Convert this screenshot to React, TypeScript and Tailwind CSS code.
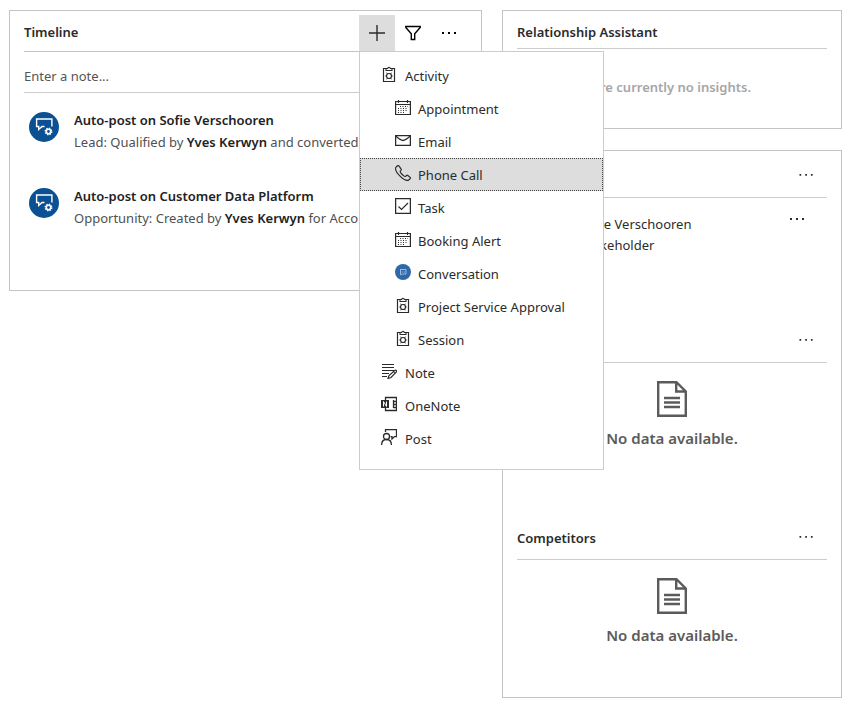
import type { ReactNode } from "react";

function Svg({ children, size = 16 }: { children: ReactNode; size?: number }) {
  return (
    <svg
      width={size}
      height={size}
      viewBox={`0 0 ${size} ${size}`}
      fill="none"
      stroke="currentColor"
      strokeWidth="1"
      aria-hidden="true"
      className="shrink-0"
    >
      {children}
    </svg>
  );
}

const ClipboardIcon = () => (
  <Svg>
    <path d="M5 2.500H2.500v13h11v-13H11" strokeWidth="1.200" />
    <path d="M5 4.500v-2h1.700a1.300 1.300 0 0 1 2.600 0H11v2z" strokeWidth="1.100" />
    <circle cx="8" cy="10" r="2.500" strokeWidth="1.200" />
    <path d="M6.500 8 5.700 6.700M9.500 8l.8-1.300M5.500 10H4.300M11.700 10h-1.200M6.500 12l-.8 1.300M9.500 12l.8 1.300" />
  </Svg>
);

const CalendarIcon = () => (
  <Svg>
    <path d="M.6 2.500h14.800v13H.6zM.6 5.500h14.800M3.500 1v3M12.500 1v3" strokeWidth="1.200" />
    <path d="M5 7.500h8M3 9.500h10M3 11.500h10M3 13.500h7" strokeDasharray="1 1.500" />
  </Svg>
);

const MailIcon = () => (
  <Svg>
    <path d="M.6 3.600h14.800v9.800H.6z" strokeWidth="1.300" />
    <path d="M.7 4C3 6 6 8.500 8 8.500S13 6 15.300 4" strokeWidth="1.300" />
  </Svg>
);

const PhoneIcon = () => (
  <Svg>
    <path
      d="M2.200 1 .9 2.300C-.1 4 1.600 7.700 4.800 10.900s6.900 5.200 8.800 4.200l1.500-1.300c.4-.5.4-1 0-1.400l-2.200-1.900c-.5-.4-1-.3-1.400 0l-1 .9c-.7.4-1.800-.4-3.300-1.900S4.800 7 5.200 6.200l.8-.9c.4-.5.4-.9 0-1.400L4.100 1.100C3.600.6 2.700.5 2.200 1z"
      strokeWidth="1.200"
    />
  </Svg>
);

const TaskIcon = () => (
  <Svg>
    <path d="M.6.600h14.800v14.800H.6z" strokeWidth="1.300" />
    <path d="m3.500 8.500 3 3 6.500-6.500" strokeWidth="1.200" />
  </Svg>
);

const ConversationIcon = () => (
  <Svg>
    <circle cx="8" cy="8" r="8" fill="#2f69a8" stroke="none" />
    <path d="M5 5.500h6v4.500H7.500L5 11M5.500 5.500V10" stroke="#a9c5e2" strokeWidth=".9" />
    <path d="M6.700 8h1M8.700 8h1" stroke="#a9c5e2" />
  </Svg>
);

const NoteIcon = () => (
  <Svg>
    <path d="M1 1.500h12M1 4.500h12M1 7.500h12M1 10.500h7M1 13.500h5" strokeWidth="1.200" />
    <path d="m7 15.500 1-3 6-5.200c1-.5 2 .6 1.400 1.500L10 14.500z" fill="white" strokeWidth="1.200" />
    <path d="m12.500 8.700 1.500 1.500" />
  </Svg>
);

const OneNoteIcon = () => (
  <Svg>
    <path d="M4.500 4V1.500h11v13h-11V12M12.500 4v8M12.500 5.500h3M12.500 8.500h3M12.500 11.500h3" strokeWidth="1.300" />
    <path d="M0 4h8v8H0z" fill="currentColor" stroke="none" />
    <path d="M2.500 10.500v-5l3 5v-5" stroke="white" />
  </Svg>
);

const PostIcon = () => (
  <Svg>
    <circle cx="5.500" cy="7.500" r="3" strokeWidth="1.300" />
    <path d="M.6 16c0-3.300 2-5.500 4.900-5.500s4.900 2.200 4.900 5.500" strokeWidth="1.300" />
    <path d="M4.500 3V.600h11v7h-2L11 10V7.600H9.500" strokeWidth="1.300" />
  </Svg>
);

const PlusIcon = () => (
  <Svg>
    <path d="M8 0v16M0 8h16" strokeWidth="1.400" />
  </Svg>
);

const FilterIcon = () => (
  <Svg>
    <path d="M.8 1.500h14.400v1L9.700 8.800v5.700H6.300V8.800L.8 2.500z" strokeWidth="1.400" />
  </Svg>
);

const MoreIcon = ({ wide = false }: { wide?: boolean }) => (
  <Svg>
    {wide ? (
      <path d="M1 7h2v2H1zM7 7h2v2H7zM13 7h2v2h-2z" fill="currentColor" stroke="none" />
    ) : (
      <path d="M1.500 7h1.700v1.700H1.500zM7.200 7h1.700v1.700H7.200zM12.900 7h1.700v1.700h-1.700z" fill="currentColor" stroke="none" />
    )}
  </Svg>
);

const AutoPostIcon = () => (
  <svg width="30" height="30" viewBox="0 0 30 30" fill="none" aria-hidden="true" className="mt-[3px] shrink-0">
    <circle cx="15" cy="15" r="15" fill="#0a5093" />
    <path d="M15.500 14.500H13L9.700 17.500v-3H7.600V7h15.300v7.500" stroke="white" strokeWidth="1.400" />
    <circle cx="19.500" cy="19.500" r="2.200" stroke="white" strokeWidth="1.600" />
    <circle cx="19.500" cy="19.500" r="3.200" stroke="white" strokeWidth="1.500" strokeDasharray="1.400 1.110" />
  </svg>
);

const DocumentIcon = () => (
  <svg width="30" height="36" viewBox="0 0 30 36" fill="none" stroke="#5b5b5b" strokeWidth="2.400" aria-hidden="true">
    <path d="M1.200 1.200h18.300l9.300 9.300v24.300H1.200zM19.200 1.200v9.300h9.600" />
    <path d="M7 17h16M7 21.500h16M7 26h16" />
  </svg>
);

type Item = { label: string; icon: () => ReactNode; nested?: boolean; active?: boolean };

const items: Item[] = [
  { label: "Activity", icon: ClipboardIcon },
  { label: "Appointment", icon: CalendarIcon, nested: true },
  { label: "Email", icon: MailIcon, nested: true },
  { label: "Phone Call", icon: PhoneIcon, nested: true, active: true },
  { label: "Task", icon: TaskIcon, nested: true },
  { label: "Booking Alert", icon: CalendarIcon, nested: true },
  { label: "Conversation", icon: ConversationIcon, nested: true },
  { label: "Project Service Approval", icon: ClipboardIcon, nested: true },
  { label: "Session", icon: ClipboardIcon, nested: true },
  { label: "Note", icon: NoteIcon },
  { label: "OneNote", icon: OneNoteIcon },
  { label: "Post", icon: PostIcon },
];

function CreateMenu() {
  return (
    <div
      role="menu"
      aria-label="Create"
      className="absolute top-full left-0 z-10 w-[245px] border border-[#cccccc] bg-white pt-[7px] pb-[14px]"
    >
      {items.map(({ label, icon: Icon, nested, active }) => (
        <button
          key={label}
          type="button"
          role="menuitem"
          className={`flex h-[33px] w-full items-center border text-left ${
            nested ? "gap-[7px] pl-[34px]" : "gap-2 pl-5"
          } ${active ? "border-dotted border-[#444444] bg-[#dddddd]" : "border-transparent"}`}
        >
          <span className="pb-1">
            <Icon />
          </span>
          {label}
        </button>
      ))}
    </div>
  );
}

function Post({ subject, children }: { subject: string; children: ReactNode }) {
  return (
    <li className="flex h-[76px] gap-[15px] pl-[5px]">
      <AutoPostIcon />
      <div className="min-w-0 flex-1 leading-[22px]">
        <h3 className="truncate font-semibold text-[#222222]">Auto-post on {subject}</h3>
        <p className="overflow-hidden whitespace-nowrap text-[#505050]">{children}</p>
      </div>
    </li>
  );
}

function Section({ title, label, children }: { title?: string; label: string; children: ReactNode }) {
  return (
    <section aria-label={label}>
      <header className="flex h-[47px] items-center justify-between border-b border-[#cccccc] pt-1 pr-[13px]">
        <h2 className="font-semibold">{title}</h2>
        <button type="button" aria-label={`More commands for ${label}`} className="ml-auto pb-[2px]">
          <MoreIcon />
        </button>
      </header>
      {children}
    </section>
  );
}

function NoData() {
  return (
    <div className="flex h-[137px] flex-col items-center pt-[18px]">
      <DocumentIcon />
      <p className="mt-[10px] text-[15px] leading-[22px] font-semibold text-[#5b5b5b]">No data available.</p>
    </div>
  );
}

export default function App() {
  return (
    <main className="grid grid-cols-[473fr_340fr] items-start gap-5 bg-white pt-[10px] pr-4 pb-4 pl-[9px] font-['Noto_Sans','Open_Sans',sans-serif] text-[13px] leading-5 text-[#2b2b2b]">
      <section aria-label="Timeline" className="min-w-0 border border-[#c4c4c4] px-[14px] pb-[29px]">
        <header className="flex items-center justify-between border-b border-[#c4c4c4] pt-1">
          <h2 className="pb-[2px] font-semibold">Timeline</h2>
          <div className="flex text-black">
            <div className="relative text-[#2b2b2b]">
              <button
                type="button"
                aria-label="Create a record"
                aria-haspopup="menu"
                aria-expanded="true"
                className="flex size-9 items-center justify-center bg-[#dddddd]"
              >
                <PlusIcon />
              </button>
              <CreateMenu />
            </div>
            <button type="button" aria-label="Filter" className="flex size-9 items-center justify-center">
              <FilterIcon />
            </button>
            <button type="button" aria-label="More commands" className="flex size-9 items-center justify-center">
              <MoreIcon wide />
            </button>
          </div>
        </header>
        <input
          type="text"
          aria-label="Enter a note"
          placeholder="Enter a note..."
          className="block h-[41px] w-full border-b border-[#cccccc] pt-2 outline-none placeholder:text-[#555555]"
        />
        <ul className="pt-4 pr-[108px]">
          <Post subject="Sofie Verschooren">
            Lead: Qualified by <b className="font-semibold text-[#222222]">Yves Kerwyn</b> and converted
          </Post>
          <Post subject="Customer Data Platform">
            Opportunity: Created by <b className="font-semibold text-[#222222]">Yves Kerwyn</b> for Acco
          </Post>
        </ul>
      </section>

      <div className="flex min-w-0 flex-col gap-[21px]">
        <section aria-label="Relationship Assistant" className="h-[119px] border border-[#c4c4c4] px-[14px]">
          <h2 className="border-b border-[#cccccc] pt-[11px] pb-[6px] font-semibold">Relationship Assistant</h2>
          <p className="pt-7 pr-[76px] text-right font-semibold text-[#a6a6a6]">There are currently no insights.</p>
        </section>

        <div className="border border-[#c4c4c4] px-[14px]">
          <Section label="Stakeholders">
            <div className="flex h-[118px] items-start justify-between pt-4 pr-[22px] pl-16">
              <div className="leading-[21px]">
                <p>Sofie Verschooren</p>
                <p>Stakeholder</p>
              </div>
              <button type="button" aria-label="More commands for Sofie Verschooren" className="-mt-[3px]">
                <MoreIcon wide />
              </button>
            </div>
          </Section>
          <Section label="Sales Team">
            <div className="pb-[13px]">
              <NoData />
            </div>
          </Section>
          <Section label="Competitors" title="Competitors">
            <NoData />
          </Section>
        </div>
      </div>
    </main>
  );
}
